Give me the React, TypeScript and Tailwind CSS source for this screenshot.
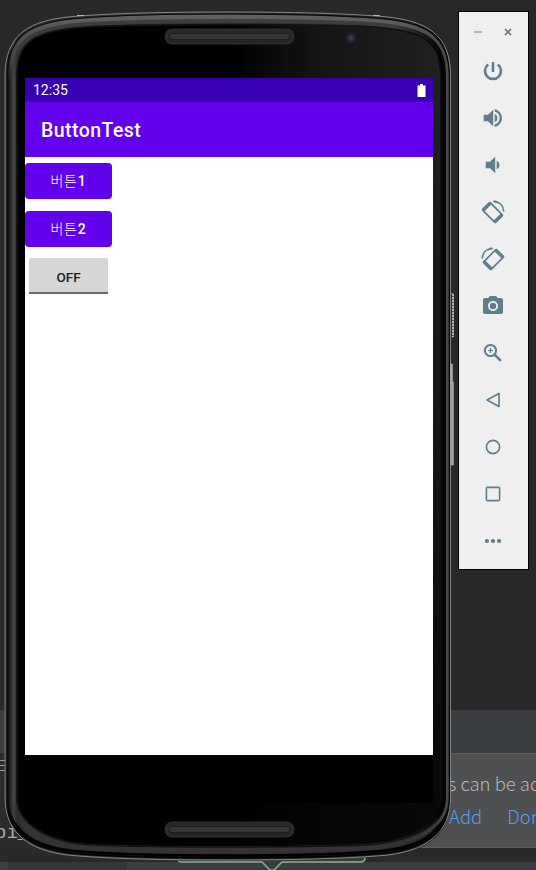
import type { ReactNode } from "react";
import { MdCameraAlt } from "react-icons/md";

function outline(left: number, top: number, right: number, bottom: number, dip = 4) {
  const bend = 24 - (top - 12) * 0.45;
  const side = 21 - (top - 12) * 0.5;
  return [
    `M${left} 76`,
    `C${left} ${top + bend} ${left + side} ${top + dip + 3} ${left + 75} ${top + dip}`,
    `Q${left + 125} ${top} 228 ${top}`,
    `Q${right - 125} ${top} ${right - 75} ${top + dip}`,
    `C${right - side} ${top + dip + 3} ${right} ${top + bend} ${right} 76`,
    `V798`,
    `C${right} ${bottom - 30} ${right - 20} ${bottom - dip - 3} ${right - 74} ${bottom - dip}`,
    `Q${right - 125} ${bottom} 228 ${bottom}`,
    `Q${left + 125} ${bottom} ${left + 74} ${bottom - dip}`,
    `C${left + 20} ${bottom - dip - 3} ${left} ${bottom - 30} ${left} 798`,
    `Z`,
  ].join(" ");
}

function PhoneBody() {
  return (
    <svg className="absolute inset-0" width="460" height="870" viewBox="0 0 460 870" fill="none">
      <defs>
        <linearGradient id="rim" x1="5" x2="451" y1="0" y2="0" gradientUnits="userSpaceOnUse">
          <stop offset="0" stopColor="#242424" />
          <stop offset=".009" stopColor="#141414" />
          <stop offset=".014" stopColor="#303030" />
          <stop offset=".02" stopColor="#484848" />
          <stop offset=".027" stopColor="#242424" />
          <stop offset=".05" stopColor="#303030" />
          <stop offset=".5" stopColor="#303030" />
          <stop offset=".95" stopColor="#242424" />
          <stop offset=".972" stopColor="#030303" />
          <stop offset=".985" stopColor="#111" />
          <stop offset="1" stopColor="#555" />
        </linearGradient>
        <linearGradient id="outerLight" x1="0" x2="0" y1="14" y2="85" gradientUnits="userSpaceOnUse">
          <stop offset="0" stopColor="#626262" />
          <stop offset=".4" stopColor="#4c4c4c" />
          <stop offset="1" stopColor="#444" stopOpacity="0" />
        </linearGradient>
        <linearGradient id="innerLight" x1="0" x2="0" y1="14" y2="85" gradientUnits="userSpaceOnUse">
          <stop offset="0" stopColor="#404040" />
          <stop offset=".4" stopColor="#383838" />
          <stop offset="1" stopColor="#383838" stopOpacity="0" />
        </linearGradient>
        <linearGradient id="rightShade" x1="395" x2="440" y1="0" y2="0" gradientUnits="userSpaceOnUse">
          <stop offset="0" stopColor="#050505" stopOpacity="0" />
          <stop offset="1" stopColor="#050505" />
        </linearGradient>
        <linearGradient id="rightLight" x1="410" x2="445" y1="0" y2="0" gradientUnits="userSpaceOnUse">
          <stop offset="0" stopColor="#444" stopOpacity="0" />
          <stop offset="1" stopColor="#484848" />
        </linearGradient>
        <linearGradient id="glass" x1="17" x2="440" y1="0" y2="0" gradientUnits="userSpaceOnUse">
          <stop offset=".5" stopColor="#000" />
          <stop offset=".72" stopColor="#151515" />
          <stop offset="1" stopColor="#202020" />
        </linearGradient>
        <linearGradient id="fade" x1="0" x2="0" y1="100" y2="810" gradientUnits="userSpaceOnUse">
          <stop offset="0" stopColor="#000" stopOpacity="0" />
          <stop offset="1" stopColor="#000" stopOpacity=".75" />
        </linearGradient>
        <linearGradient id="slot" x1="0" x2="0" y1="0" y2="1">
          <stop offset="0" stopColor="#262626" />
          <stop offset=".5" stopColor="#2c2c2c" />
          <stop offset="1" stopColor="#202020" />
        </linearGradient>
        <linearGradient id="lipDark" x1="0" x2="0" y1="795" y2="825" gradientUnits="userSpaceOnUse">
          <stop offset="0" stopColor="#000" stopOpacity="0" />
          <stop offset="1" stopColor="#000" />
        </linearGradient>
        <linearGradient id="lipLight" x1="0" x2="0" y1="795" y2="835" gradientUnits="userSpaceOnUse">
          <stop offset="0" stopColor="#333" stopOpacity="0" />
          <stop offset="1" stopColor="#333" />
        </linearGradient>
        <radialGradient id="lens">
          <stop offset="0" stopColor="#404060" />
          <stop offset=".5" stopColor="#26263a" />
          <stop offset="1" stopColor="#171717" />
        </radialGradient>
        <clipPath id="body"><path d={outline(5, 11.5, 451, 861)} /></clipPath>
      </defs>
      <path d={outline(5, 11.5, 451, 861)} fill="url(#rim)" />
      <g clipPath="url(#body)">
        <path d={outline(10, 17, 446, 852)} stroke="url(#outerLight)" strokeWidth="5" />
        <path d={outline(14, 21, 443, 849, 3)} stroke="url(#innerLight)" strokeWidth="4" />
        <path d={outline(7, 14, 449, 856.5)} stroke="url(#lipDark)" strokeWidth="4.500" />
        <path d={outline(13, 20, 443.500, 850, 3)} stroke="url(#lipLight)" strokeWidth="6" />
        <path d={outline(12.5, 20, 443.500, 851, 3)} stroke="url(#lipLight)" strokeWidth="1.500" />
      </g>
      <path d={outline(7.5, 14, 449, 857)} stroke="#0c0c0c" strokeWidth="1.2" />
      <path d={outline(17, 25, 440, 846, 2)} fill="url(#glass)" />
      <path d={outline(17, 25, 440, 846, 2)} fill="url(#fade)" />
      <path d={outline(17, 24.5, 441, 847, 2)} stroke="#121212" strokeWidth="1.500" />
      <path d={outline(14, 22, 443.5, 846, 3)} stroke="url(#rightShade)" strokeWidth="5" />
      <path d={outline(10, 17, 447.3, 851)} stroke="url(#rightLight)" strokeWidth="2.500" />
      <path d={outline(7.5, 14, 449.5, 857)} stroke="url(#rightShade)" strokeWidth="1" />
      <path d={outline(5.1, 12, 450.5, 860)} stroke="#858585" strokeWidth="1" />
      <path d="M77 15.500h7M373 15.500h7" stroke="#b5b5b5" strokeWidth="1" />
      <path d="M451.500 293.500h1.500v43.500h-1.500" stroke="#999" strokeWidth="1" />
      <path d="M453 294v43" stroke="#ccc" strokeWidth="1.500" strokeDasharray="2 1" />
      <path d="M451 364.500h1v18h1v82h-2z" fill="#777" stroke="#aaa" strokeWidth="1.500" />
      {[29, 822].map((y) => (
        <g key={y}>
          <rect x="165.500" y={y + 0.5} width="128" height="14" rx="7" fill="url(#slot)" stroke="#2c2c2c" strokeWidth="2" />
          <rect x="169" y={y + 4.5} width="121" height="6" rx="3" fill="#353535" stroke="#1c1c1c" strokeWidth="1" />
        </g>
      ))}
      <circle cx="351" cy="38" r="6.500" fill="url(#lens)" />
    </svg>
  );
}

function PowerIcon() {
  return (
    <svg width="24" height="24" viewBox="0 0 24 24" fill="none" stroke="#607d8b" strokeWidth="2.600">
      <path d="M12 3v10M7.200 5.500a8 8 0 1 0 9.600 0" />
    </svg>
  );
}

function ZoomIcon() {
  return (
    <svg width="24" height="24" viewBox="0 0 24 24" fill="none" stroke="#607d8b" strokeWidth="2">
      <circle cx="9.500" cy="9.500" r="5.600" />
      <path d="m13.700 13.700 6.100 6.100" strokeWidth="2.500" />
      <path d="M9.500 7v5M7 9.500h5" strokeWidth="1.200" />
    </svg>
  );
}

function RotateIcon({ flipped = false }: { flipped?: boolean }) {
  return (
    <svg width="26" height="26" viewBox="0 0 26 26" fill="none" className={flipped ? "-scale-x-100" : ""}>
      <g transform="rotate(-45 12.5 13.5)">
        <path fillRule="evenodd" fill="#607d8b" d="M8 3.500h9q1.700 0 1.700 1.700v16.600q0 1.700-1.700 1.700H8q-1.700 0-1.700-1.700V5.200Q6.300 3.500 8 3.500ZM8 7v13h9V7Z" />
      </g>
      <path d="M13.500 2.700C19.500 2.500 23.300 6.500 23.700 12.500" stroke="#607d8b" strokeWidth="1.700" />
      <path d="m12.500 2 3.500-.4 2 3.200Z" fill="#607d8b" />
    </svg>
  );
}

function VolumeIcon({ loud = false }: { loud?: boolean }) {
  return (
    <svg width="24" height="24" viewBox="0 0 24 24" fill="#607d8b">
      <g transform={loud ? undefined : "translate(2 0)"}>
        <path d="M2.700 8.700v6.600H7l5.200 5V3.700L7 8.700Z" />
        <path d="M13.700 7.700v8.600A4.700 4.700 0 0 0 13.700 7.700Z" />
        {loud && <path d="M13.700 3v2.700a6.500 6.500 0 0 1 0 12.600V21a9.200 9.200 0 0 0 0-18Z" />}
      </g>
    </svg>
  );
}

function Shape({ children }: { children: ReactNode }) {
  return (
    <svg width="20" height="20" viewBox="0 0 20 20" fill="none" stroke="#607d8b" strokeWidth="1.600" strokeLinejoin="round">
      {children}
    </svg>
  );
}

function Toolbar() {
  const items: ReactNode[] = [
    <PowerIcon />,
    <VolumeIcon loud />,
    <VolumeIcon />,
    <RotateIcon />,
    <RotateIcon flipped />,
    <MdCameraAlt size={24} />,
    <ZoomIcon />,
    <Shape><path d="M16 3.500v13L4 10Z" /></Shape>,
    <Shape><circle cx="10" cy="10" r="6.600" /></Shape>,
    <Shape><rect x="3.400" y="3.400" width="13.200" height="13.200" rx="1" /></Shape>,
    <Shape><path d="M3.900 10h.01M10 10h.01M16.100 10h.01" strokeWidth="4.200" strokeLinecap="round" /></Shape>,
  ];
  return (
    <aside className="absolute left-[458px] top-[11px] flex h-[559px] w-[71px] flex-col border border-black bg-[#efefef] text-[#607d8b]">
      <div className="flex h-[35px] items-center pl-[15px] pt-[5px]">
        <svg width="42" height="12" viewBox="0 0 42 12" fill="none">
          <path d="M0 6h8" stroke="#a0a9ad" strokeWidth="1.700" />
          <path d="m31 3 6 6m0-6-6 6" stroke="#68767d" strokeWidth="1.600" />
        </svg>
      </div>
      <div className="flex flex-col pr-[1px]">
        {items.map((item, i) => (
          <button key={i} className="flex h-[47px] items-center justify-center">{item}</button>
        ))}
      </div>
    </aside>
  );
}

function Editor() {
  return (
    <div className="flex h-[870px] flex-col bg-[#282828]">
      <div className="h-[711px] border-b border-[#383838]" />
      <div className="h-[42px] bg-[#3a3e41]" />
      <div className="flex h-[95px]">
        <div className="w-[228px] shrink-0 bg-[#2b2b2b] font-['Liberation_Mono'] text-[19px] leading-[24px] text-[#aaa]">
          <div className="-ml-1 h-[68px]">
            <svg width="12" height="22" viewBox="0 0 12 22" stroke="#9b9b9b"><path d="M0 7.500h9M0 12.500h9M0 17.500h9" /></svg>
          </div>
          <div className="-ml-[5px]">bi_</div>
        </div>
        <div className="w-[308px] shrink-0 border-y border-[#5a5b5c] bg-[#4d4f50] pl-[220px] pt-[14px] font-['Noto_Sans_CJK_KR','Noto_Sans',sans-serif] text-[18.500px] leading-[30px] text-[#b8b8b8]">
          <p className="whitespace-nowrap font-light">s can be added</p>
          <p className="flex gap-[25px] whitespace-nowrap pl-[1px] pt-[3px] text-[#589df6]"><span className="font-light">Add</span><span className="font-light">Don't</span></p>
        </div>
      </div>
      <div className="h-[14px] bg-[#292929]" />
      <div className="flex h-[8px] bg-[#3a3e41]">
        <div className="w-[127px] border-l-[8px] border-[#3c3f41] bg-[#323638]" />
      </div>
    </div>
  );
}

function Phone() {
  return (
    <section className="absolute inset-0 w-[460px]">
      <svg className="absolute left-[176px] top-[854px]" width="194" height="16" viewBox="0 0 194 16">
        <path d="M2 0V5q0 3 4 3h80l8 8h4l8-8h78q5 0 5-4V0" fill="#344035" stroke="#91ad8c" strokeWidth="1.500" />
      </svg>
      <PhoneBody />
      <div className="relative ml-[25px] mt-[78px] flex h-[725px] w-[408px] flex-col bg-black font-['Roboto','Noto_Sans_CJK_KR',sans-serif]">
        <header className="flex h-[24px] items-center justify-between bg-[#3700b3] pl-2 pr-[7px] text-[14px] text-white">
          <span>12:35</span>
          <svg width="9" height="13" viewBox="0 0 9 13" fill="white"><path d="M3 0h3v1.500h2.500V13H.5V1.500H3Z" /></svg>
        </header>
        <h1 className="flex h-[55px] items-center bg-[#6200ee] pl-4 pt-[2px] text-[19.500px] font-medium tracking-[0.450px] text-white">ButtonTest</h1>
        <main className="flex h-[598px] flex-col items-start bg-white pt-[6px]">
          <div className="flex flex-col gap-[12px] text-[14px] font-medium tracking-[0.800px] text-white">
            <button className="flex h-[36px] w-[87px] items-center justify-center rounded-[4px] bg-[#6200ee] pt-px"><span className="font-light">버튼</span>1</button>
            <button className="flex h-[36px] w-[87px] items-center justify-center rounded-[4px] bg-[#6200ee] pt-px"><span className="font-light">버튼</span>2</button>
          </div>
          <button className="ml-[4px] mt-[11px] flex h-[36px] w-[79px] items-center justify-center rounded-t-[2px] border-b-2 border-[#696969] bg-[#d6d6d6] pt-[4px] text-[13.500px] font-medium text-[#202020]">OFF</button>
        </main>
      </div>
    </section>
  );
}

export default function App() {
  return (
    <div className="relative h-[870px] w-[536px] overflow-hidden">
      <Editor />
      <Phone />
      <Toolbar />
    </div>
  );
}
